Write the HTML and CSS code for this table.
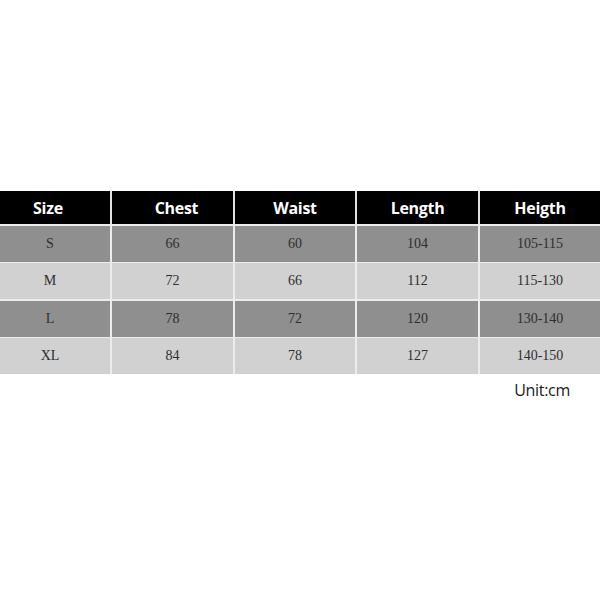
FILE: index.html
```html
<!DOCTYPE html>
<html>
<head>
<meta charset="utf-8">
<link rel="stylesheet" href="styles.css">
</head>
<body>
<div class="page">
  <div class="table">
    <div class="row head">
      <div class="cell first">Size</div>
      <div class="cell shift">Chest</div>
      <div class="cell">Waist</div>
      <div class="cell">Length</div>
      <div class="cell">Heigth</div>
    </div>
    <div class="row dark">
      <div class="cell first">S</div>
      <div class="cell">66</div>
      <div class="cell">60</div>
      <div class="cell">104</div>
      <div class="cell">105-115</div>
    </div>
    <div class="row light">
      <div class="cell first">M</div>
      <div class="cell">72</div>
      <div class="cell">66</div>
      <div class="cell">112</div>
      <div class="cell">115-130</div>
    </div>
    <div class="row dark">
      <div class="cell first">L</div>
      <div class="cell">78</div>
      <div class="cell">72</div>
      <div class="cell">120</div>
      <div class="cell">130-140</div>
    </div>
    <div class="row light">
      <div class="cell first">XL</div>
      <div class="cell">84</div>
      <div class="cell">78</div>
      <div class="cell">127</div>
      <div class="cell">140-150</div>
    </div>
  </div>
  <div class="unit">Unit:cm</div>
</div>
</body>
</html>
```
FILE: styles.css
```css
html, body {
  margin: 0;
  padding: 0;
  background: #ffffff;
}
.page {
  width: 600px;
  height: 600px;
  padding-top: 191px;
  box-sizing: border-box;
}
.table {
  display: flex;
  flex-direction: column;
  gap: 1px;
  background: #ececec;
}
.row {
  display: grid;
  grid-template-columns: 110px 121px 120px 121px 120px;
  column-gap: 2px;
  height: 36px;
  background: #ececec;
}
.row.head {
  height: 33px;
  margin-bottom: 1px;
  background: #e0e0e0;
}
.row.light + .row.dark {
  margin-top: 1px;
}
.cell {
  display: flex;
  align-items: center;
  justify-content: center;
  font-family: "Liberation Serif", serif;
  font-size: 14px;
  color: #2e2e2e;
}
.cell.first {
  padding-right: 10px;
}
.head .cell {
  background: #000000;
  color: #ffffff;
  font-family: "Open Sans", "Noto Sans", sans-serif;
  font-weight: 700;
  font-size: 16px;
  letter-spacing: -0.3px;
}
.head .cell.first {
  padding-right: 14px;
}
.head .cell.shift {
  padding-left: 8px;
}
.dark .cell {
  background: #8f8f8f;
}
.light .cell {
  background: #d1d1d1;
}
.unit {
  text-align: right;
  padding-right: 30px;
  margin-top: 5px;
  font-family: "Open Sans", "Noto Sans", sans-serif;
  font-size: 16px;
  letter-spacing: -0.3px;
  color: #1a1a1a;
}
```
